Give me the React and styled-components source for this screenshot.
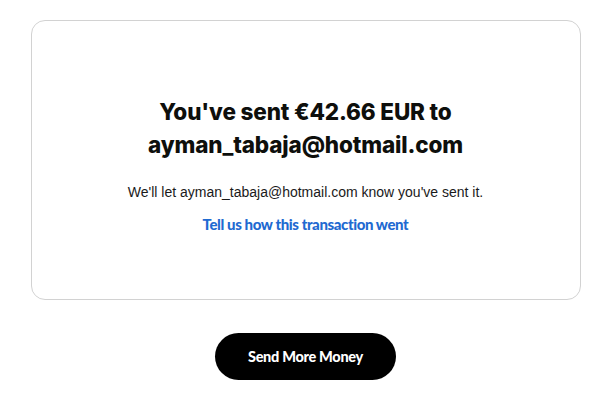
import React from 'react';
import styled, {createGlobalStyle} from 'styled-components';

const GlobalStyle = createGlobalStyle`
  body {
    margin: 0;
    background: #ffffff;
    font-family: "Liberation Sans", Arial, sans-serif;
  }
`;

const Page = styled.div`
  width: 607px;
  height: 418px;
  display: flex;
  flex-direction: column;
  align-items: center;
  padding-top: 20px;
  box-sizing: border-box;
`;

// Card holding the confirmation message
const Card = styled.div`
  width: 550px;
  height: 280px;
  margin-left: 4px;
  box-sizing: border-box;
  border: 1px solid #d2d2d2;
  border-radius: 14px;
  display: flex;
  flex-direction: column;
  align-items: center;
  padding-top: 74px;
`;

const Title = styled.h1`
  margin: 0;
  font-family: "Inter", sans-serif;
  font-weight: 800;
  font-size: 22.5px;
  line-height: 33px;
  letter-spacing: -0.15px;
  color: #0e0f0c;
  text-align: center;
`;

const Note = styled.p`
  margin: 22px 0 0;
  font-size: 14px;
  line-height: 18px;
  color: #1a1a1a;
`;

const FeedbackLink = styled.a`
  margin-top: 14px;
  font-family: "Lato", sans-serif;
  font-weight: 900;
  font-size: 15px;
  line-height: 18px;
  letter-spacing: -0.4px;
  color: #1f6ad1;
  text-decoration: none;
`;

const Button = styled.button`
  margin-top: 33px;
  margin-left: 4px;
  width: 181px;
  height: 47px;
  border: none;
  border-radius: 24px;
  background: #000000;
  color: #ffffff;
  font-family: "Lato", sans-serif;
  font-weight: 900;
  font-size: 14.5px;
  letter-spacing: -0.3px;
`;

export default function App() {
  return (
    <>
      <GlobalStyle />
      <Page>
        <Card>
          <Title>
            You've sent €42.66 EUR to
            <br />
            ayman_tabaja@hotmail.com
          </Title>
          <Note>We'll let ayman_tabaja@hotmail.com know you've sent it.</Note>
          <FeedbackLink href="#">Tell us how this transaction went</FeedbackLink>
        </Card>
        <Button>Send More Money</Button>
      </Page>
    </>
  );
}
